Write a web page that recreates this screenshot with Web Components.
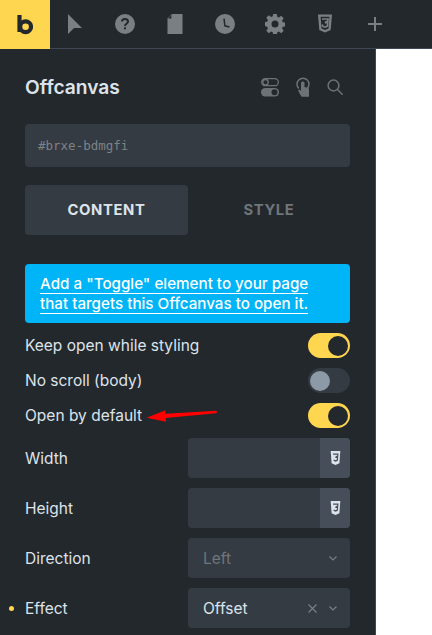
<!DOCTYPE html>
<html>
<head>
<meta charset="utf-8">
<style>
  html, body { margin: 0; height: 635px; overflow: hidden; background: #fff; }
  body { font-family: Inter, "Liberation Sans", sans-serif; }
</style>
</head>
<body>
<bx-app>
  <bx-topbar></bx-topbar>
  <bx-panel>
    <bx-title-row>Offcanvas</bx-title-row>
    <bx-id-field>#brxe-bdmgfi</bx-id-field>
    <bx-tabs></bx-tabs>
    <bx-alert>Add a "Toggle" element to your page that targets this Offcanvas to open it.</bx-alert>
    <bx-row label="Keep open while styling"><bx-switch on></bx-switch></bx-row>
    <bx-row label="No scroll (body)"><bx-switch></bx-switch></bx-row>
    <bx-row label="Open by default"><bx-switch on></bx-switch></bx-row>
    <bx-row label="Width"><bx-input></bx-input></bx-row>
    <bx-row label="Height"><bx-input></bx-input></bx-row>
    <bx-row label="Direction"><bx-select placeholder>Left</bx-select></bx-row>
    <bx-row label="Effect" dot><bx-select clearable>Offset</bx-select></bx-row>
    <bx-arrow></bx-arrow>
  </bx-panel>
</bx-app>

<script>
const CSS3_PATH = "M1 0h14l-1.3 15.6L8 18l-5.7-2.4z";

class BxApp extends HTMLElement {
  constructor() {
    super();
    this.attachShadow({ mode: "open" }).innerHTML = `
      <style>
        :host { display: flex; flex-direction: column; width: 432px; height: 635px; overflow: hidden; }
      </style>
      <slot></slot>`;
  }
}

class BxTopbar extends HTMLElement {
  constructor() {
    super();
    this.attachShadow({ mode: "open" }).innerHTML = `
      <style>
        :host { display: flex; height: 48px; flex: none; background: #23282d; border-bottom: 1px solid #3e4753; }
        .logo {
          width: 50px; height: 49px; margin-bottom: -1px; background: #ffd64f;
          display: flex; align-items: center; justify-content: center;
        }
        .tool { width: 50px; display: flex; align-items: center; justify-content: center; }
        svg { display: block; }
      </style>
      <div class="logo">
        <svg width="16" height="20" viewBox="0 0 16 20">
          <path d="M2.500 0v17" stroke="#23282d" stroke-width="4.200" fill="none"/>
          <circle cx="8.600" cy="11.700" r="5.400" stroke="#23282d" stroke-width="4.200" fill="none"/>
        </svg>
      </div>
      <div class="tool">
        <svg width="20" height="20" viewBox="0 0 20 20"><path d="M3 0l14 14H9l-6 6z" fill="#7a7f84"/></svg>
      </div>
      <div class="tool">
        <svg width="20" height="20" viewBox="0 0 20 20">
          <circle cx="10" cy="10" r="10" fill="#7a7f84"/>
          <path d="M7 7.600C7 5.800 8.400 5 10 5s3 .9 3 2.500c0 2.300-3 2.200-3 4.600" stroke="#23282d" stroke-width="2" fill="none"/>
          <rect x="9" y="13.300" width="2" height="2" fill="#23282d"/>
        </svg>
      </div>
      <div class="tool">
        <svg width="16" height="20" viewBox="0 0 16 20">
          <path d="M5 0h10.500v20H.5V4.500z" fill="#7a7f84"/>
          <path d="M4.400 1v3.400H1z" fill="#23282d"/>
        </svg>
      </div>
      <div class="tool">
        <svg width="20" height="20" viewBox="0 0 20 20">
          <circle cx="10" cy="10" r="10" fill="#7a7f84"/>
          <path d="M9 4.600l.9 7.200 4.600 1.200" stroke="#23282d" stroke-width="1.500" fill="none"/>
        </svg>
      </div>
      <div class="tool">
        <svg width="20" height="20" viewBox="0 0 20 20">
          <path fill="#7a7f84" fill-rule="evenodd" d="M8.200 0h3.600l.5 2.700 1.600.7 2.300-1.600 2.500 2.500-1.600 2.300.7 1.600 2.700.5v3.600l-2.700.5-.7 1.600 1.600 2.300-2.500 2.500-2.300-1.600-1.600.7-.5 2.700H8.200l-.5-2.700-1.600-.7-2.300 1.600-2.500-2.500 1.600-2.300-.7-1.600L-.5 11.800V8.200l2.700-.5.7-1.600-1.600-2.300 2.500-2.500 2.300 1.600 1.600-.7zM10 6.500a3.500 3.500 0 1 0 0 7 3.500 3.500 0 0 0 0-7z"/>
        </svg>
      </div>
      <div class="tool">
        <svg width="16" height="19" viewBox="0 0 16 18" style="margin-top:-1px">
          <path d="${CSS3_PATH}" fill="#7a7f84"/>
          <path d="M3.600 2.300h8.800l-.9 11.700L8 15.400l-3.500-1.400z" fill="#23282d"/>
          <path d="M5 4.500h6l-.2 2.100-2.800 1.500h2.700l-.3 3.500L8 12.700l-2.500-1-.1-1.800" stroke="#7a7f84" stroke-width="1.700" fill="none"/>
        </svg>
      </div>
      <div class="tool">
        <svg width="14" height="14" viewBox="0 0 14 14"><path d="M7 0v14M0 7h14" stroke="#7a7f84" stroke-width="2"/></svg>
      </div>`;
  }
}

class BxPanel extends HTMLElement {
  constructor() {
    super();
    this.attachShadow({ mode: "open" }).innerHTML = `
      <style>
        :host {
          display: flex; flex-direction: column; gap: 10px; position: relative;
          box-sizing: border-box; width: 376px; flex: 1; padding: 25px 25px 0;
          background: #23282d; border-right: 1px solid #3e4753;
          color: #dde3ea; font: 400 15.500px Inter, "Liberation Sans", sans-serif;
        }
      </style>
      <slot></slot>`;
  }
}

class BxTitleRow extends HTMLElement {
  constructor() {
    super();
    this.attachShadow({ mode: "open" }).innerHTML = `
      <style>
        :host { display: flex; align-items: center; height: 26px; margin-bottom: 14px; }
        h1 { margin: 0; flex: 1; font: 600 19.200px Inter, "Liberation Sans", sans-serif; color: #dde3ea; }
        .actions { display: flex; align-items: center; margin-right: 7px; gap: 17px; }
        svg { display: block; }
      </style>
      <h1><slot></slot></h1>
      <div class="actions">
        <svg width="18" height="20" viewBox="0 0 18 20">
          <rect x=".7" y="1.700" width="16.600" height="7" rx="3.500" stroke="#6d7277" stroke-width="1.300" fill="none"/>
          <circle cx="4.500" cy="5.200" r="2.700" stroke="#6d7277" stroke-width="1.300" fill="none"/>
          <rect y="11" width="18" height="8.500" rx="4.200" fill="#6d7277"/>
          <circle cx="13.500" cy="15.200" r="3" fill="#23282d"/>
        </svg>
        <svg width="14" height="20" viewBox="0 0 14 20">
          <path d="M2.800 11.500a6 6 0 1 1 8.400 0" stroke="#6d7277" stroke-width="1.500" fill="none"/>
          <path d="M5 5.500a2 2 0 0 1 3.500 0V10l4 1 .5 1.500V19.700H5.500L2 13.500l1.500-1L5 14z" fill="#6d7277"/>
        </svg>
        <svg width="16" height="16" viewBox="0 0 16 16">
          <circle cx="6.500" cy="6.500" r="5.400" stroke="#6d7277" stroke-width="1.500" fill="none"/>
          <path d="M10.500 10.500L15.700 15.700" stroke="#6d7277" stroke-width="1.500"/>
        </svg>
      </div>`;
  }
}

class BxIdField extends HTMLElement {
  constructor() {
    super();
    this.attachShadow({ mode: "open" }).innerHTML = `
      <style>
        :host {
          display: flex; align-items: center; height: 43px; padding: 0 13px; margin-bottom: 8px;
          background: #343b43; border-radius: 4px; color: #7d8287;
          font: 400 12.500px "DejaVu Sans Mono", monospace;
        }
      </style>
      <slot></slot>`;
  }
}

class BxTabs extends HTMLElement {
  constructor() {
    super();
    this.attachShadow({ mode: "open" }).innerHTML = `
      <style>
        :host { display: grid; grid-template-columns: 163px 1fr; height: 50px; margin-bottom: 19px; }
        div {
          display: flex; align-items: center; justify-content: center; border-radius: 4px;
          font: 700 14.800px Inter, "Liberation Sans", sans-serif; letter-spacing: .6px; color: #70757a;
        }
        .active { background: #343b43; color: #dde3ea; }
      </style>
      <div class="active">CONTENT</div>
      <div>STYLE</div>`;
  }
}

class BxAlert extends HTMLElement {
  constructor() {
    super();
    this.attachShadow({ mode: "open" }).innerHTML = `
      <style>
        :host {
          display: block; box-sizing: border-box; height: 59px; padding: 10px 20px 10px 15px;
          background: #00b4f8; border-radius: 4px; color: #fff;
          font: 500 15.200px/20px Inter, "Liberation Sans", sans-serif;
        }
        span { border-bottom: 1px solid #fff; }
      </style>
      <span><slot></slot></span>`;
  }
}

class BxRow extends HTMLElement {
  constructor() {
    super();
    const dot = this.hasAttribute("dot") ? `<i></i>` : "";
    this.attachShadow({ mode: "open" }).innerHTML = `
      <style>
        :host { display: flex; align-items: center; justify-content: space-between; position: relative; }
        i {
          position: absolute; left: -16px; top: calc(50% - 2.500px);
          width: 5px; height: 5px; border-radius: 50%; background: #ffd64f;
        }
      </style>
      ${dot}<label>${this.getAttribute("label")}</label>
      <slot></slot>`;
  }
}

class BxSwitch extends HTMLElement {
  constructor() {
    super();
    const on = this.hasAttribute("on");
    this.attachShadow({ mode: "open" }).innerHTML = `
      <style>
        :host {
          display: flex; align-items: center; justify-content: ${on ? "flex-end" : "flex-start"};
          box-sizing: border-box; width: 42px; height: 25px; padding: 2px;
          border-radius: 13px; background: ${on ? "#ffd64f" : "#343b43"};
        }
        b { width: 20px; height: 20px; border-radius: 50%; background: ${on ? "#23282d" : "#8c99a6"}; }
      </style>
      <b></b>`;
  }
}

class BxInput extends HTMLElement {
  constructor() {
    super();
    this.attachShadow({ mode: "open" }).innerHTML = `
      <style>
        :host {
          display: flex; justify-content: flex-end; width: 162px; height: 40px;
          background: #343b43; border-radius: 4px; overflow: hidden;
        }
        div { width: 30px; background: #454e59; display: flex; align-items: center; justify-content: center; }
        svg { display: block; }
      </style>
      <div>
        <svg width="11" height="14" viewBox="0 0 16 18" preserveAspectRatio="none">
          <path d="${CSS3_PATH}" fill="#dde3ea"/>
          <path d="M4.500 4h7l-.3 2.500L8 8.200h3l-.4 3.600L8 12.800l-2.700-1" stroke="#454e59" stroke-width="1.700" fill="none"/>
        </svg>
      </div>`;
  }
}

class BxSelect extends HTMLElement {
  constructor() {
    super();
    const dim = this.hasAttribute("placeholder");
    const clear = this.hasAttribute("clearable")
      ? `<svg width="9" height="9" viewBox="0 0 9 9"><path d="M.5.5l8 8M8.500.5l-8 8" stroke="#7a7f84" stroke-width="1.200"/></svg>`
      : "";
    this.attachShadow({ mode: "open" }).innerHTML = `
      <style>
        :host {
          display: flex; align-items: center; box-sizing: border-box; width: 162px; height: 40px;
          padding: 0 13px 0 15px; gap: 12px; background: #343b43; border-radius: 4px;
          color: ${dim ? "#70757a" : "#dde3ea"};
        }
        span { flex: 1; }
        svg { display: block; }
      </style>
      <span><slot></slot></span>
      ${clear}
      <svg width="8" height="5" viewBox="0 0 8 5"><path d="M.5.500L4 4l3.500-3.500" stroke="#7a7f84" stroke-width="1.200" fill="none"/></svg>`;
  }
}

class BxArrow extends HTMLElement {
  constructor() {
    super();
    this.attachShadow({ mode: "open" }).innerHTML = `
      <style>
        :host { position: absolute; left: 146px; top: 358px; width: 72px; height: 16px; }
        svg { display: block; }
      </style>
      <svg width="72" height="16" viewBox="0 0 72 16">
        <path d="M.5 10.700L19.500 3.300 19.300 6.700 70 3.800 71.500 5 70 6.200 19.800 11 20 14.700z" fill="#f00"/>
      </svg>`;
  }
}

customElements.define("bx-app", BxApp);
customElements.define("bx-topbar", BxTopbar);
customElements.define("bx-panel", BxPanel);
customElements.define("bx-title-row", BxTitleRow);
customElements.define("bx-id-field", BxIdField);
customElements.define("bx-tabs", BxTabs);
customElements.define("bx-alert", BxAlert);
customElements.define("bx-row", BxRow);
customElements.define("bx-switch", BxSwitch);
customElements.define("bx-input", BxInput);
customElements.define("bx-select", BxSelect);
customElements.define("bx-arrow", BxArrow);
</script>
</body>
</html>
